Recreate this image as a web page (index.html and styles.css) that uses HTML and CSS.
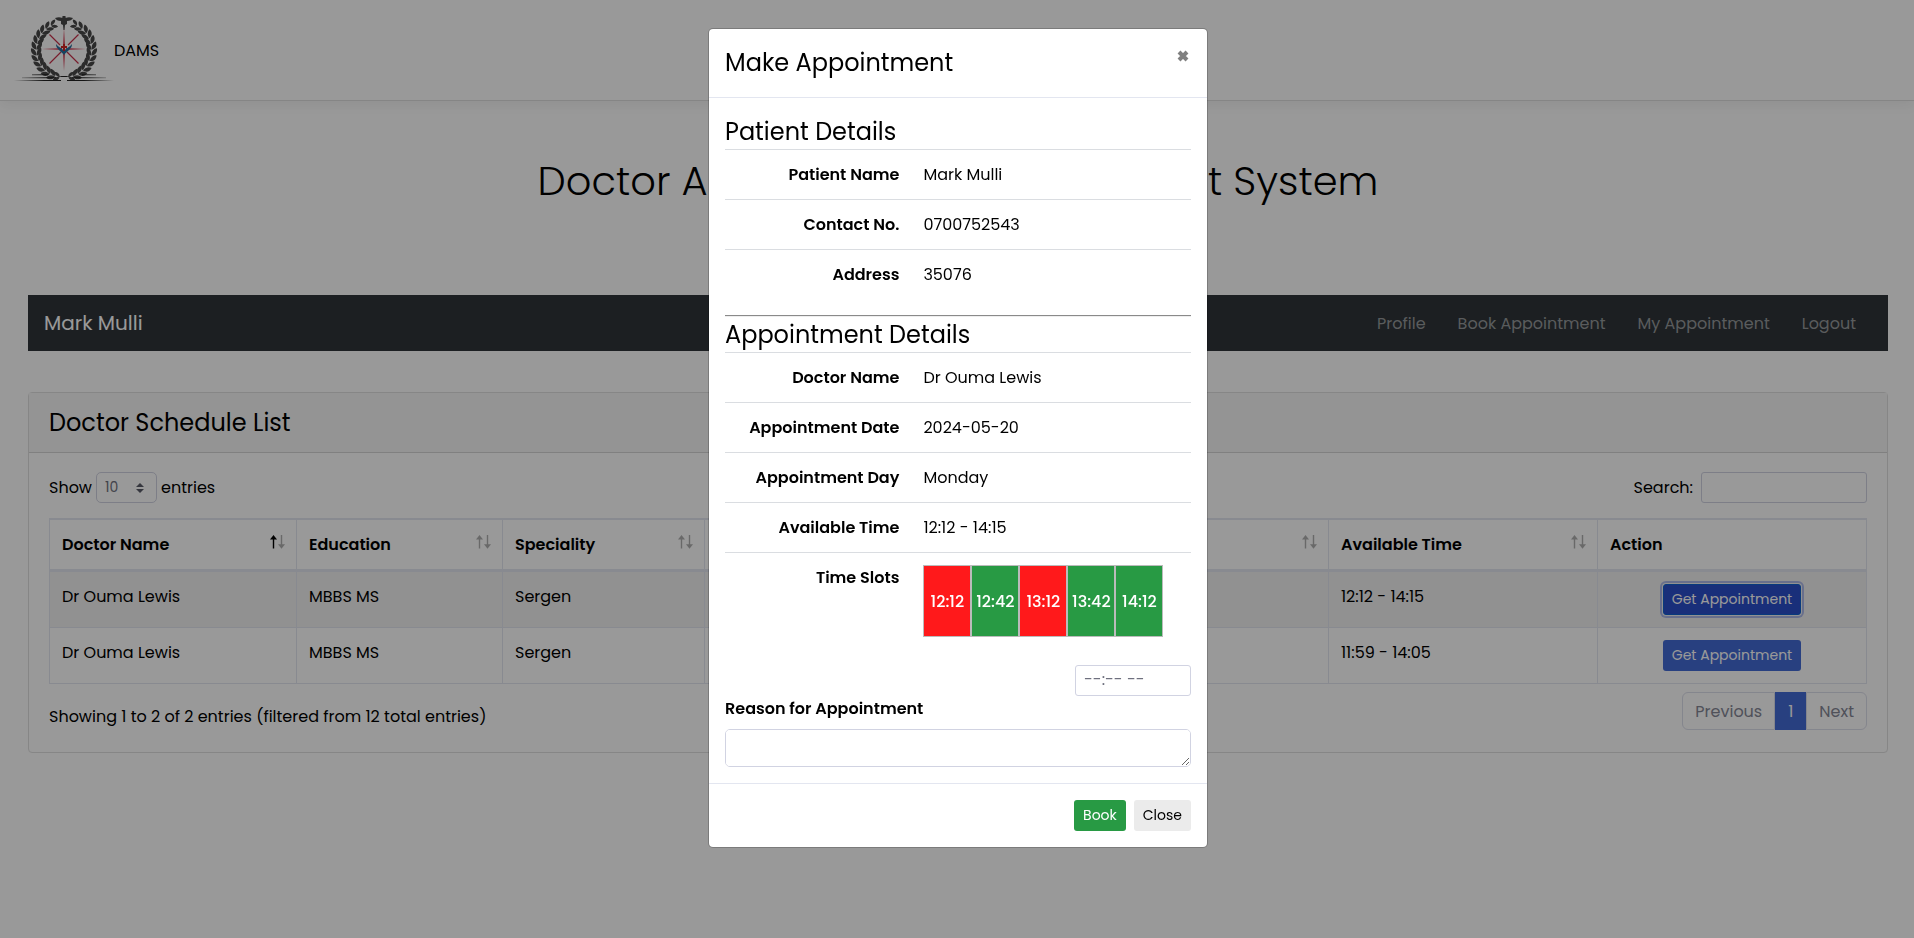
FILE: index.html
```html
<!DOCTYPE html>
<html lang="en">
<head>
<meta charset="utf-8">
<title>DAMS</title>
<link rel="stylesheet" href="styles.css">
</head>
<body>
<svg class="defs" aria-hidden="true">
  <symbol id="sort" viewBox="0 0 16 14">
    <g class="up"><path d="M3.500 3v10.500" stroke="currentColor" stroke-width="1.400"/><path d="M0 4.500 3.500 0 7 4.500z" fill="currentColor"/></g>
    <g><path d="M11.500 0v11" stroke="currentColor" stroke-width="1.400"/><path d="M8 9.200h7L11.500 13.700z" fill="currentColor"/></g>
  </symbol>
</svg>

<header class="topbar">
  <svg class="logo" viewBox="0 0 100 68" role="img" aria-label="DAMS logo">
    <defs>
      <path id="leaf" d="M-.2 3.500C-4.500 3-6.200-.5-5.200-4-2.500-3.500 0-1 -.2 3.500zM.2 3.500C-.2-1 2-3.500 4.700-4 5.700-.5 4 3 .2 3.500z"/>
      <g id="branch">
        <use href="#leaf" transform="translate(50 34) rotate(-22) translate(0 -27.500) rotate(90) scale(.8)"/>
        <use href="#leaf" transform="translate(50 34) rotate(-34) translate(0 -27.500) rotate(90) scale(.9)"/>
        <use href="#leaf" transform="translate(50 34) rotate(-46) translate(0 -27.500) rotate(90)"/>
        <use href="#leaf" transform="translate(50 34) rotate(-58) translate(0 -27.500) rotate(90)"/>
        <use href="#leaf" transform="translate(50 34) rotate(-70) translate(0 -27.500) rotate(90)"/>
        <use href="#leaf" transform="translate(50 34) rotate(-82) translate(0 -27.500) rotate(90)"/>
        <use href="#leaf" transform="translate(50 34) rotate(-94) translate(0 -27.500) rotate(90)"/>
        <use href="#leaf" transform="translate(50 34) rotate(-106) translate(0 -27.500) rotate(90)"/>
        <use href="#leaf" transform="translate(50 34) rotate(-118) translate(0 -27.500) rotate(90)"/>
        <use href="#leaf" transform="translate(50 34) rotate(-130) translate(0 -27.500) rotate(90)"/>
        <use href="#leaf" transform="translate(50 34) rotate(-142) translate(0 -27.500) rotate(90)"/>
        <use href="#leaf" transform="translate(50 34) rotate(-154) translate(0 -27.500) rotate(90)"/>
        <use href="#leaf" transform="translate(50 34) rotate(-165) translate(0 -27.500) rotate(90) scale(.8)"/>
      </g>
      <linearGradient id="fade"><stop offset="0" stop-color="#222" stop-opacity="0"/><stop offset=".3" stop-color="#222"/><stop offset=".7" stop-color="#222"/><stop offset="1" stop-color="#222" stop-opacity="0"/></linearGradient>
    </defs>
    <g fill="#484848">
      <use href="#branch"/>
      <use href="#branch" transform="translate(100 0) scale(-1 1)"/>
      <path d="M41 2c3-1 5-1 7.500 0a1.700 1.700 0 1 1 3 0c2.500-1 4.500-1 7.500 0-1 2-3 3-6 3v3l-2 1-.5 5h-1L49 9l-2-1V5c-3 0-5-1-6-3z"/>
    </g>
    <g fill="url(#fade)"><path d="M18 58.300h16v1H18zM68 58.300h14v1H68zM8 61.300h34v1H8zM58 61.300h34v1H58zM0 64h47v1H0zM53 64h47v1H53z"/><path d="M44 60h12v1H44z"/></g>
    <g fill="#d84a60"><path d="M50 12l1 18h-2zM50 55l1-18h-2zM28 33l20-1v2zM72 33l-20-1v2z"/></g>
    <g stroke="#c8304a" stroke-width="1.200"><path d="M35.500 18.500 46 29M64.500 18.500 54 29M35.500 47.500 47 36M64.500 47.500 53 36"/></g>
    <path d="M42 28c2 3 6 4 8 7 2-3 6-4 8-7 0 5-4 6-8 11-4-5-8-6-8-11z" fill="#2b6f9e"/>
    <path d="M49 28h2v2h2v2h-2v3h-2v-3h-2v-2h2z" fill="#d22323"/>
  </svg>
  <span class="brand">DAMS</span>
</header>

<main class="page">
  <h1 class="hero">Doctor Appointment Management System</h1>

  <nav class="navbar">
    <a class="user" href="#">Mark Mulli</a>
    <div class="links">
      <a href="#">Profile</a>
      <a href="#">Book Appointment</a>
      <a href="#">My Appointment</a>
      <a href="#">Logout</a>
    </div>
  </nav>

  <section class="card">
    <h2 class="card-header">Doctor Schedule List</h2>
    <div class="card-body">
      <div class="controls">
        <label class="length">Show
          <span class="select-wrap"><select class="small-field"><option>10</option></select><svg viewBox="0 0 8 10"><path d="M0 4 4 0l4 4zM0 6h8l-4 4z" fill="#5a5c69"/></svg></span>
          entries</label>
        <label class="search">Search: <input class="small-field" type="search"></label>
      </div>
      <table class="schedule">
        <colgroup><col class="c1"><col class="c2"><col class="c3"><col class="c4"><col class="c5"><col class="c6"><col></colgroup>
        <thead>
          <tr>
            <th><div class="head asc">Doctor Name <svg><use href="#sort"/></svg></div></th>
            <th><div class="head">Education <svg><use href="#sort"/></svg></div></th>
            <th><div class="head">Speciality <svg><use href="#sort"/></svg></div></th>
            <th><div class="head">Appointment Date <svg><use href="#sort"/></svg></div></th>
            <th><div class="head">Appointment Day <svg><use href="#sort"/></svg></div></th>
            <th><div class="head">Available Time <svg><use href="#sort"/></svg></div></th>
            <th>Action</th>
          </tr>
        </thead>
        <tbody>
          <tr><td>Dr Ouma Lewis</td><td>MBBS MS</td><td>Sergen</td><td>2024-05-20</td><td>Monday</td><td>12:12 - 14:15</td><td class="action"><button class="btn primary active">Get Appointment</button></td></tr>
          <tr><td>Dr Ouma Lewis</td><td>MBBS MS</td><td>Sergen</td><td>2024-05-21</td><td>Tuesday</td><td>11:59 - 14:05</td><td class="action"><button class="btn primary">Get Appointment</button></td></tr>
        </tbody>
      </table>
      <div class="table-footer">
        <p class="info">Showing 1 to 2 of 2 entries (filtered from 12 total entries)</p>
        <div class="pagination"><button>Previous</button><button class="current">1</button><button>Next</button></div>
      </div>
    </div>
  </section>
</main>

<div class="backdrop">
  <form class="modal" role="dialog" aria-labelledby="modal-title">
    <header class="modal-header">
      <h4 class="title" id="modal-title">Make Appointment</h4>
      <button class="close" type="button" aria-label="Close dialog"><svg viewBox="0 0 12 12"><path d="M2 2l8 8M10 2l-8 8" stroke="#808080" stroke-width="4"/></svg></button>
    </header>
    <div class="modal-body">
      <h4 class="title">Patient Details</h4>
      <table class="details">
        <tr><th>Patient Name</th><td>Mark Mulli</td></tr>
        <tr><th>Contact No.</th><td>0700752543</td></tr>
        <tr><th>Address</th><td>35076</td></tr>
      </table>
      <hr class="divider">
      <h4 class="title">Appointment Details</h4>
      <table class="details">
        <tr><th>Doctor Name</th><td>Dr Ouma Lewis</td></tr>
        <tr><th>Appointment Date</th><td>2024-05-20</td></tr>
        <tr><th>Appointment Day</th><td>Monday</td></tr>
        <tr><th>Available Time</th><td>12:12 - 14:15</td></tr>
        <tr><th>Time Slots</th><td><div class="slots"><span class="slot taken">12:12</span><span class="slot">12:42</span><span class="slot taken">13:12</span><span class="slot">13:42</span><span class="slot">14:12</span></div></td></tr>
      </table>
      <input class="time small-field" type="text" placeholder="--:-- --" aria-label="Appointment time">
      <label class="reason-label" for="reason">Reason for Appointment</label>
      <textarea class="reason" id="reason"></textarea>
    </div>
    <footer class="modal-footer">
      <button class="btn success" type="button">Book</button>
      <button class="btn light" type="button">Close</button>
    </footer>
  </form>
</div>
</body>
</html>
```
FILE: styles.css
```css
* { box-sizing: border-box; }

body {
  margin: 0;
  min-height: 100vh;
  background: #fff;
  color: #000;
  font: 400 16px/25px Poppins, Inter, "Liberation Sans", sans-serif;
}

h1, h2, h4, p { margin: 0; font-weight: 400; }
button, input, select, textarea { font: inherit; }
a { text-decoration: none; }

.defs { position: absolute; width: 0; height: 0; }

.topbar {
  display: flex;
  align-items: center;
  height: 101px;
  padding: 0 14px;
  border-bottom: 1px solid #dedede;
  box-shadow: 0 4px 12px rgba(0, 0, 0, .06);
}
.logo { width: 100px; height: 68px; }

.page { padding: 0 26px 0 28px; }
.hero {
  padding: 48px 0 82px;
  font-size: 40px;
  line-height: 64px;
  font-weight: 300;
  text-align: center;
}

.navbar {
  display: flex;
  align-items: center;
  justify-content: space-between;
  height: 56px;
  padding: 0 32px 0 16px;
  background: #2f353a;
}
.user { color: #fff; font-size: 20px; }
.links { display: flex; gap: 32px; }
.links a { color: #979a9c; }

.card {
  margin-top: 41px;
  border: 1px solid #dfdfdf;
  border-radius: 4px;
}
.card-header {
  padding: 12px 20px 11px;
  border-bottom: 1px solid #d5d5d5;
  background: #f7f7f7;
  font-size: 24px;
  line-height: 36px;
}
.card-body { padding: 19px 20px 22px; }

.controls {
  display: flex;
  justify-content: space-between;
  margin-bottom: 15px;
}
.length { display: flex; align-items: center; gap: 4px; }
.search { display: flex; align-items: center; gap: 8px; }
.small-field {
  height: 31px;
  padding: 4px 8px;
  border: 1px solid #d1d3e2;
  border-radius: 3px;
  background: transparent;
  color: #6e707e;
  font-size: 14px;
  line-height: 21px;
  outline: none;
}
.search .small-field { width: 166px; }
.select-wrap { position: relative; display: flex; }
.select-wrap select { width: 61px; border-radius: 5px; appearance: none; }
.select-wrap svg { position: absolute; right: 13px; top: 11px; width: 8px; height: 10px; }

.schedule {
  width: 100%;
  table-layout: fixed;
  border-collapse: separate;
  border-spacing: 0;
  border: 1px solid #e3e6f0;
  border-right: 0;
}
.c1 { width: 247px; }
.c2 { width: 206px; }
.c3 { width: 202px; }
.c4 { width: 331px; }
.c5 { width: 293px; }
.c6 { width: 269px; }
.schedule th, .schedule td {
  padding: 12px;
  border-right: 1px solid #e3e6f0;
  text-align: left;
  vertical-align: top;
}
.schedule th {
  border-top: 1px solid #e3e6f0;
  border-bottom: 3px solid #e3e6f0;
  font-weight: 600;
}
.head { display: flex; justify-content: space-between; }
.head svg { width: 16px; height: 14px; margin: 3px -2px 0 0; color: #b0b0b0; }
.asc { --up: #000; }
.up { color: var(--up, inherit); }
.schedule tbody tr:first-child td { background: #f2f2f2; }
.schedule tbody tr + tr td { border-top: 1px solid #e3e6f0; }
.schedule .action { text-align: center; }

.btn {
  height: 31px;
  padding: 4px 8px;
  border: 1px solid transparent;
  border-radius: 3px;
  font-size: 14px;
  line-height: 21px;
  white-space: nowrap;
}
.action .btn { display: block; margin: 0 auto; }
.primary { background: #446cd5; color: #fff; }
.primary.active { background: #2b4fcb; border-color: #0f62d0; box-shadow: 0 0 0 1px #f2f2f2, 0 0 0 3px #aeb9ea; }
.success { background: #289a44; color: #fff; }
.light { background: #ebebeb; color: #000; }

.table-footer { display: flex; justify-content: space-between; padding-top: 8px; }
.info { padding-top: 12px; }
.pagination { display: flex; }
.pagination button {
  height: 38px;
  padding: 0 12px;
  border: 1px solid #dddfeb;
  background: transparent;
  color: #858796;
}
.pagination button:first-child { border-radius: 6px 0 0 6px; }
.pagination button:last-child { border-radius: 0 6px 6px 0; }
.pagination .current { border-color: #446cd5; background: #446cd5; color: #fff; }

.backdrop {
  position: fixed;
  inset: 0;
  padding: 28px 28px 28px 30px;
  background: rgba(0, 0, 0, .4);
  overflow: auto;
}
.modal {
  max-width: 500px;
  margin: 0 auto;
  border: 1px solid rgba(0, 0, 0, .2);
  border-radius: 5px;
  background: #fff;
  background-clip: padding-box;
}
.title { font-size: 24px; line-height: 36px; }
.modal-header {
  display: flex;
  justify-content: space-between;
  align-items: flex-start;
  padding: 16px;
  border-bottom: 1px solid #e3e6f0;
}
.close { padding: 5px 2px; border: 0; background: none; line-height: 0; }
.close svg { width: 12px; height: 12px; }
.modal-body { display: flex; flex-direction: column; padding: 16px; }
.details { width: 100%; border-collapse: separate; border-spacing: 0; margin-top: -1px; }
.details th, .details td {
  padding: 12px;
  border-top: 1px solid #dadde1;
  vertical-align: top;
  text-align: left;
}
.details th { width: 40%; font-weight: 600; text-align: right; }
.divider {
  width: 100%;
  margin: 16px 0 0;
  border: 0;
  border-top: 1px solid #8a8a8a;
  border-bottom: 1px solid #eee;
}
.slots { display: flex; }
.slot {
  width: 48px;
  height: 72px;
  border: 1px solid #bbb;
  background: #289a44;
  color: #fff;
  font-weight: 500;
  line-height: 72px;
  text-align: center;
}
.taken { background: #ff191b; }
.time { align-self: flex-end; width: 116px; margin-top: 16px; background: #fff; }
.time::placeholder { color: #6e707e; font-size: 16px; opacity: 1; }
.reason-label { font-weight: 600; }
.reason {
  height: 38px;
  margin-top: 8px;
  padding: 6px 12px;
  border: 1px solid #d1d3e2;
  border-radius: 5px;
  resize: vertical;
}
.modal-footer {
  display: flex;
  justify-content: flex-end;
  gap: 8px;
  padding: 16px;
  border-top: 1px solid #e3e6f0;
}
```
